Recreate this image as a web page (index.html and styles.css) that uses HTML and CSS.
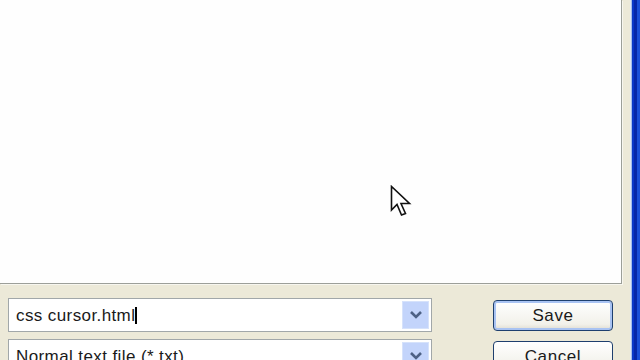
FILE: index.html
```html
<!doctype html>
<html lang="en">
	<head>
		<meta charset="UTF-8">
		<meta name="viewport" content="width=device-width, initial-scale=1.0">
		<title>Save As</title>
		<link rel="stylesheet" href="styles.css">
	</head>
	<body>

		<div class="window">
			<div class="dialog">

				<div class="list"></div>

				<div class="fields">
					<div class="combo">
						<span class="value">css cursor.html<span class="caret"></span></span>
						<span class="drop">
							<svg width="14" height="10" viewBox="0 0 14 10"><path d="M2 2 L7 7 L12 2" fill="none" stroke="#4d6185" stroke-width="2.6"/></svg>
						</span>
					</div>
					<button type="button" class="btn default">Save</button>

					<div class="combo">
						<span class="value">Normal text file (*.txt)</span>
						<span class="drop">
							<svg width="14" height="10" viewBox="0 0 14 10"><path d="M2 2 L7 7 L12 2" fill="none" stroke="#4d6185" stroke-width="2.6"/></svg>
						</span>
					</div>
					<button type="button" class="btn">Cancel</button>
				</div>

			</div>
			<div class="frame"></div>
		</div>

		<!-- mouse pointer over the file list -->
		<svg class="pointer" width="26" height="36" viewBox="0 0 26 36">
			<path d="M1.5 1.5 L1.5 25 L7 19.5 L11.5 30 L15.5 28.5 L11 18.5 L19.5 18.5 Z" fill="#fff" stroke="#111" stroke-width="1.6" stroke-linejoin="miter"/>
		</svg>

	</body>
</html>
```

FILE: styles.css
```css
*{
	box-sizing:border-box;
}

body
{
	margin:0;
	width:640px;
	height:360px;
	overflow:hidden;
	background-color:#ECE9D8;
	font-family:"Liberation Sans", Arial, sans-serif;
}

.window
{
	display:flex;
	height:360px;
}

.dialog
{
	flex:1;
	background-color:#ECE9D8;
}

.frame
{
	width:10px;
	background:linear-gradient(to right, #dfe6f2 0 1px, #a6bde8 1px 2px, #0a37c8 2px 4px, #0727a8 4px 7px, #1a4fd8 7px 10px);
}

.list
{
	height:284px;
	width:622px;
	background-color:#fefefe;
	border-right:1px solid #9c9f99;
	border-bottom:1px solid #9c9f99;
	box-shadow:1px 1px 0 #f7f6ef;
}

.fields
{
	display:grid;
	grid-template-columns:424px 120px;
	column-gap:61px;
	row-gap:7px;
	align-items:center;
	padding:14px 0 0 8px;
}

.combo
{
	display:flex;
	align-items:center;
	height:34px;
	background-color:#fff;
	border:1px solid #a1a7a9;
	padding:2px;
}

.value
{
	flex:1;
	padding:2px 0 0 5px;
	font-size:17px;
	color:#1a1a1a;
	letter-spacing:0.4px;
}

.caret
{
	display:inline-block;
	width:2px;
	height:17px;
	background-color:#000;
	vertical-align:-3px;
}

.drop
{
	display:flex;
	align-items:center;
	justify-content:center;
	width:27px;
	height:28px;
	background-color:#c3d4fb;
	border:1px solid #d6e2fb;
}

.btn
{
	height:31px;
	font-family:"Liberation Sans", Arial, sans-serif;
	font-size:17px;
	letter-spacing:0.6px;
	color:#1a1a1a;
	border:1px solid #1e3f6e;
	border-radius:4px;
	background:linear-gradient(#ffffff, #f2f1ea 80%, #dedbcf);
	padding:2px 0 0;
}

.default
{
	box-shadow:inset 0 0 0 2px #a9c3f2;
}

.pointer
{
	position:absolute;
	left:390px;
	top:185px;
}
```
